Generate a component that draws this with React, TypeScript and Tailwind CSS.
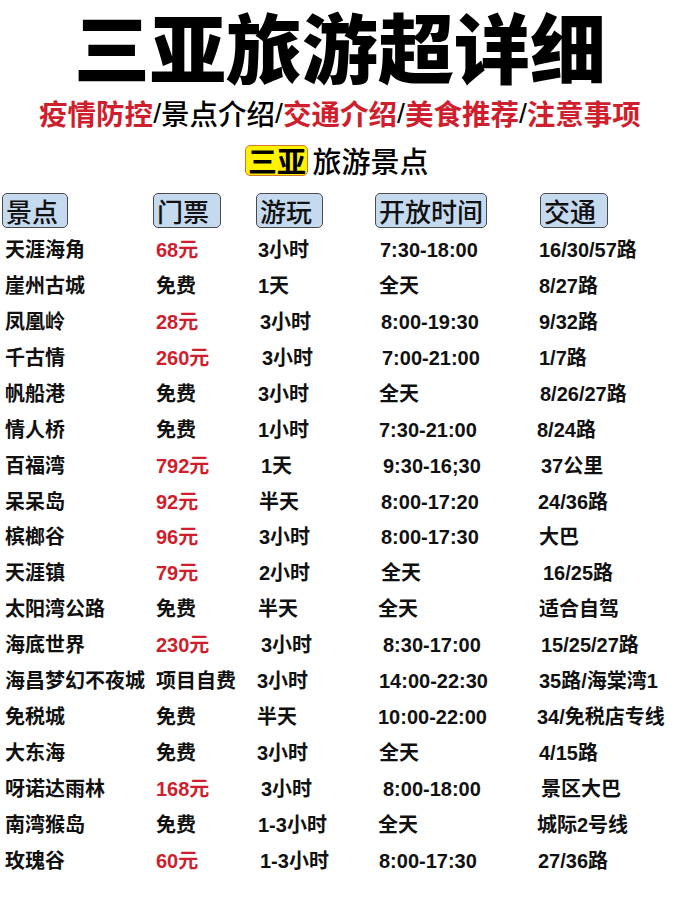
import React from "react";

type Row = [string, string, boolean, string, number, string, number, string, number];

const rows: Row[] = [
  ["天涯海角", "68元", true, "3小时", 1, "7:30-18:00", 2, "16/30/57路", 2],
  ["崖州古城", "免费", false, "1天", 1, "全天", 1, "8/27路", 2],
  ["凤凰岭", "28元", true, "3小时", 3, "8:00-19:30", 3, "9/32路", 2],
  ["千古情", "260元", true, "3小时", 5, "7:00-21:00", 4, "1/7路", 2],
  ["帆船港", "免费", false, "3小时", 1, "全天", 1, "8/26/27路", 3],
  ["情人桥", "免费", false, "1小时", 1, "7:30-21:00", 1, "8/24路", 0],
  ["百福湾", "792元", true, "1天", 4, "9:30-16;30", 5, "37公里", 4],
  ["呆呆岛", "92元", true, "半天", 2, "8:00-17:20", 3, "24/36路", 1],
  ["槟榔谷", "96元", true, "3小时", 2, "8:00-17:30", 3, "大巴", 2],
  ["天涯镇", "79元", true, "2小时", 2, "全天", 3, "16/25路", 6],
  ["太阳湾公路", "免费", false, "半天", 1, "全天", 0, "适合自驾", 2],
  ["海底世界", "230元", true, "3小时", 4, "8:30-17:00", 5, "15/25/27路", 4],
  ["海昌梦幻不夜城", "项目自费", false, "3小时", 0, "14:00-22:30", 1, "35路/海棠湾1", 2],
  ["免税城", "免费", false, "半天", 0, "10:00-22:00", 0, "34/免税店专线", 0],
  ["大东海", "免费", false, "3小时", 0, "全天", 1, "4/15路", 2],
  ["呀诺达雨林", "168元", true, "3小时", 4, "8:00-18:00", 5, "景区大巴", 4],
  ["南湾猴岛", "免费", false, "1-3小时", 1, "全天", 0, "城际2号线", 0],
  ["玫瑰谷", "60元", true, "1-3小时", 3, "8:00-17:30", 1, "27/36路", 1],
];

const off: Record<number, string> = {
  0: "",
  1: "pl-[1px]",
  2: "pl-[2px]",
  3: "pl-[3px]",
  4: "pl-[4px]",
  5: "pl-[5px]",
  6: "pl-[6px]",
};

const RED = "text-[#cf1f2e]";

function HeaderBox({ label, w, ml }: { label: string; w: string; ml: string }) {
  return (
    <div
      className={`${w} ${ml} h-[35px] shrink-0 rounded-[5px] border border-[#4a4a4a] bg-[#c5d9ef] flex items-center pl-[3px] text-[26px] leading-none text-[#111] font-medium`}
    >
      {label}
    </div>
  );
}

export default function App() {
  return (
    <div className="w-[680px] h-[906px] bg-white text-black overflow-hidden font-['Liberation_Sans','Noto_Sans_CJK_SC',sans-serif]">
      <div className="h-[92px] flex items-center justify-center">
        <h1 className="text-[76px] leading-[1.1] font-black tracking-normal font-['Noto_Sans_CJK_SC',sans-serif]">
          三亚旅游超详细
        </h1>
      </div>
      <div className="h-[42px] flex items-center justify-center text-[28.5px] leading-[1.2] font-['Noto_Sans_CJK_SC',sans-serif]">
        <span className={`${RED} font-bold`}>疫情防控</span>
        <span className="font-['Liberation_Sans',sans-serif]">/</span>
        <span className="font-medium">景点介绍</span>
        <span className="font-['Liberation_Sans',sans-serif]">/</span>
        <span className={`${RED} font-bold`}>交通介绍</span>
        <span className="font-['Liberation_Sans',sans-serif]">/</span>
        <span className={`${RED} font-bold`}>美食推荐</span>
        <span className="font-['Liberation_Sans',sans-serif]">/</span>
        <span className={`${RED} font-bold`}>注意事项</span>
      </div>
      <div className="h-[52px] flex items-center justify-center gap-[4px] pr-[6px] font-['Noto_Sans_CJK_SC',sans-serif]">
        <div className="h-[31px] w-[63px] rounded-[5px] border-[1.5px] border-[#d4762a] bg-[#fff200] flex items-center justify-center text-[29px] leading-none font-bold">
          三亚
        </div>
        <div className="text-[29px] leading-none font-medium">旅游景点</div>
      </div>
      <div className="mt-[7px] flex font-['Noto_Sans_CJK_SC',sans-serif]">
        <HeaderBox label="景点" w="w-[66px]" ml="ml-[2px]" />
        <HeaderBox label="门票" w="w-[68px]" ml="ml-[85px]" />
        <HeaderBox label="游玩" w="w-[67px]" ml="ml-[35px]" />
        <HeaderBox label="开放时间" w="w-[112px]" ml="ml-[52px]" />
        <HeaderBox label="交通" w="w-[68px]" ml="ml-[53px]" />
      </div>
      <div className="mt-[4px] flex flex-col">
        {rows.map((r, i) => (
          <div
            key={i}
            className="h-[35.94px] grid grid-cols-[151px_101px_121px_159px_1fr] items-center pl-[5px] text-[20px] leading-[1.2] font-bold text-[#111]"
          >
            <div className="whitespace-nowrap">{r[0]}</div>
            <div className={`whitespace-nowrap ${r[2] ? RED : ""}`}>{r[1]}</div>
            <div className={`whitespace-nowrap ${off[r[4]]}`}>{r[3]}</div>
            <div className={`whitespace-nowrap ${off[r[6]]}`}>{r[5]}</div>
            <div className={`whitespace-nowrap ${off[r[8]]}`}>{r[7]}</div>
          </div>
        ))}
      </div>
    </div>
  );
}
